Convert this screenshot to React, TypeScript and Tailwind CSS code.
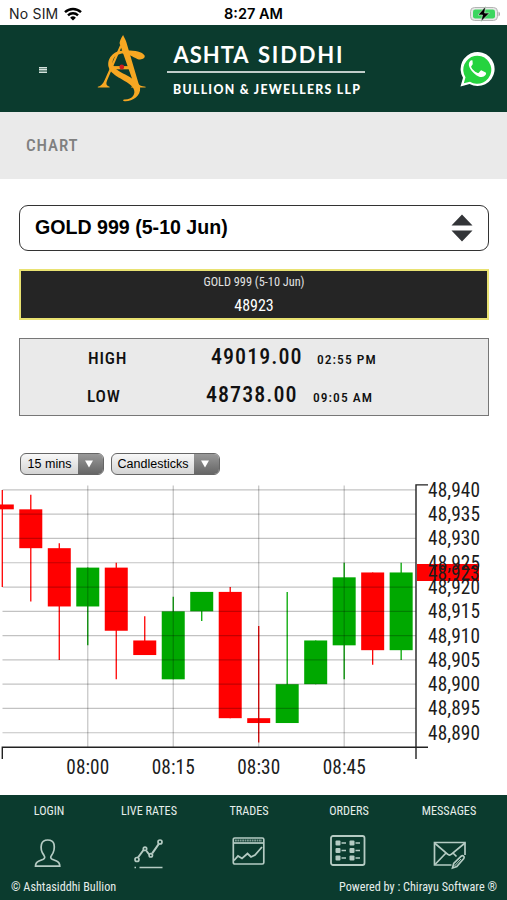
type Candle = {
  open: number;
  close: number;
  high: number;
  low: number;
};

const candles: Candle[] = [
  { open: 48937, close: 48936, high: 48940, low: 48920 },
  { open: 48936, close: 48928, high: 48939, low: 48917 },
  { open: 48928, close: 48916, high: 48929, low: 48905 },
  { open: 48916, close: 48924, high: 48924, low: 48908 },
  { open: 48924, close: 48911, high: 48925, low: 48901 },
  { open: 48909, close: 48906, high: 48914, low: 48906 },
  { open: 48901, close: 48915, high: 48918, low: 48901 },
  { open: 48915, close: 48919, high: 48919, low: 48913 },
  { open: 48919, close: 48893, high: 48920, low: 48893 },
  { open: 48893, close: 48892, high: 48912, low: 48888 },
  { open: 48892, close: 48900, high: 48919, low: 48892 },
  { open: 48900, close: 48909, high: 48909, low: 48900 },
  { open: 48908, close: 48922, high: 48925, low: 48901 },
  { open: 48923, close: 48907, high: 48923, low: 48904 },
  { open: 48907, close: 48923, high: 48925, low: 48905 },
];

const prices = [
  48940, 48935, 48930, 48925, 48920, 48915, 48910, 48905, 48900, 48895, 48890,
];

const times = [
  { label: "08:00", index: 3 },
  { label: "08:15", index: 6 },
  { label: "08:30", index: 9 },
  { label: "08:45", index: 12 },
];

const x = (i: number) => 2.3 + i * 28.49;
const y = (price: number) => 5.9 + (48940 - price) * 4.857;

function StatusBar() {
  return (
    <div className="relative flex h-[25px] items-center justify-between bg-white pr-[6px] pl-[9px] font-['Inter','Liberation_Sans',sans-serif] text-black">
      <div className="flex items-center gap-[6px] pt-[2px]">
        <span className="text-[14px] tracking-[0.2px] text-[#222]">No SIM</span>
        <svg width="18" height="14" viewBox="0 0 18 14" fill="none" stroke="#000" strokeWidth="2.4">
          <path d="M1 5.2a11.5 11.5 0 0 1 16 0" />
          <path d="M4 8.3a7.2 7.2 0 0 1 10 0" />
          <path d="M9 13.6 6.1 10.7a4.2 4.2 0 0 1 5.8 0z" fill="#000" stroke="none" />
        </svg>
      </div>
      <span className="absolute inset-x-0 top-[4px] text-center text-[14.5px] leading-[20px] font-semibold">
        8:27 AM
      </span>
      <svg className="mt-[2px]" width="32" height="16" viewBox="0 0 32 16">
        <rect x="1.5" y="1.5" width="27" height="13" rx="4" fill="#e8e8e8" stroke="#b4b4b4" />
        <rect x="4" y="3.5" width="22" height="9" rx="2.2" fill="#3bd65f" />
        <path d="M29.500 5.5c2 .8 2 4.2 0 5z" fill="#a9a9a9" />
        <path d="M16.500 0.500 9 9h4.500L12 15.500l8.500-8.500h-4.900z" fill="#000" stroke="#d8f5dc" strokeWidth=".6" />
      </svg>
    </div>
  );
}

function Logo() {
  return (
    <svg width="280" height="80" viewBox="95 30 280 80">
      <g fill="#f6a722" transform="translate(.300 .600)">
        <path d="M122.800 35.500c.9 2.200 2.600 4.500 3.200 7l12.400 42c.6 1.500 2.600 2.200 6.900 2.700v.8h-14.500v-.8c3-.3 3.300-1.200 2.800-2.900L119.500 44.500c-.7-2.400 1.800-6.500 3.300-9z" />
        <path d="M121.200 47.500 107 80.500c-1.700 4-.9 5.700 2.300 6.700v.8H97.500v-.8c3.300-.8 5.200-3 7-7l15.500-35z" />
        <path d="M144.300 56c1 3-3.500 4.800-7.300 3.300-5.500-2.200-10-6.300-16.500-5.200-6.800 1.100-9.700 7.200-7.400 12.200 3.400 7.200 25.600 11.800 26.700 21.700.9 8.500-7.700 14-15.300 13.700-1.900-.1-2.300-1.200-.8-1.800 8.300.4 12.200-5.500 9.600-10.700-4.200-8-22.200-11.900-24.800-21.200-2.400-8.600 4.400-16.700 14.500-17 8.600-.3 18.700.1 21.300 5z" />
        <path d="M112 66.500h17v3.200h-17z" />
      </g>
      <circle cx="121.800" cy="68" r="2.400" fill="#d01c1f" />
      <g fill="#fff" className="font-['Lato',sans-serif] font-bold">
        <text x="173.500" y="64" fontSize="22" textLength="75">ASHTA</text>
        <text x="258" y="64" fontSize="22" textLength="84.500">SIDDHI</text>
        <text x="173" y="95" fontSize="12.300" textLength="187" className="font-black">
          BULLION &amp; JEWELLERS LLP
        </text>
      </g>
      <path d="M167 73h198" stroke="#fff" strokeWidth="1.300" />
    </svg>
  );
}

function Header() {
  return (
    <header className="flex h-[87px] items-center bg-[#0b3b2e] pr-[11px] pl-[39px]">
      <button className="mt-[2px] flex h-[6px] w-[8px] flex-col justify-between bg-[#6f9085]">
        <span className="h-[1px] w-full bg-[#d5e2dd]" />
        <span className="h-[1px] w-full bg-[#d5e2dd]" />
        <span className="h-[1px] w-full bg-[#d5e2dd]" />
      </button>
      <div className="ml-12">
        <Logo />
      </div>
      <svg className="mt-px ml-auto" width="38" height="38" viewBox="0 0 38 38">
        <path d="M2.500 36.500 5 27.700A17 17 0 1 1 11.600 34z" fill="#fff" />
        <path d="m5.800 33.300 1.700-6A14 14 0 1 1 12 31.700z" fill="#25d33f" />
        <path
          d="M14.500 10.500c-.7-.5-1.700-.3-2.400.5-3.200 3.700.2 9 4.400 12.700 4.300 3.800 8.700 4.500 11 1.400.8-1.200.7-2.400.2-2.700l-4-2c-.6-.3-1 0-1.400.6l-1.500 1.700c-.5.500-1 .4-1.600.1-3-1.500-4.700-3.300-5.900-5.600-.3-.6 0-1 .4-1.400.7-.8 1.300-1.500 1-2.200z"
          fill="#fff"
        />
      </svg>
    </header>
  );
}

function DropButton({ label, width }: { label: string; width: string }) {
  return (
    <button
      className={`flex h-[22px] overflow-hidden rounded-[6px] border-[1.5px] border-[#666] bg-linear-to-b from-[#f8f8f8] to-[#d4d4d4] font-['Liberation_Sans',Arial,sans-serif] text-[12.500px] leading-[20px] text-black ${width}`}
    >
      <span className="flex-1 text-center whitespace-nowrap">{label}</span>
      <span className="flex h-full w-[25px] items-center justify-center bg-linear-to-b from-[#999] to-[#666] pr-[3px]">
        <svg width="8" height="8" viewBox="0 0 9 8">
          <path d="M0 0h9L4.500 8z" fill="#fff" />
        </svg>
      </span>
    </button>
  );
}

function Chart() {
  return (
    <svg className="block overflow-visible text-[19.300px]" width="507" height="311" viewBox="0 0 507 311">
      {candles.map((c, i) => {
        const color = c.close > c.open ? "#00a800" : "#ff0000";
        const top = y(Math.max(c.open, c.close));
        const bottom = y(Math.min(c.open, c.close));
        return (
          <g key={i}>
            <path d={`M${x(i)} ${y(c.high)}V${y(c.low)}`} stroke={color} strokeWidth="1.300" />
            <rect x={x(i) - 11.500} y={top} width="23" height={bottom - top} fill={color} />
          </g>
        );
      })}

      {/* grid sits on top of the candles */}
      <g stroke="#000" strokeOpacity=".24" strokeWidth="1.200">
        {prices.map((p) => (
          <path key={p} d={`M2.500 ${y(p)}H416`} />
        ))}
        {times.map((t) => (
          <path key={t.label} d={`M${x(t.index)} 1.500V263`} />
        ))}
      </g>

      <g fill="none" stroke="#222" strokeWidth="1.400">
        <path d="M428 .9H416V275" />
        <path d="M2.300 275V263.200H428" />
      </g>

      <rect x="417" y="80" width="62" height="17" fill="#ff0000" />
      <g fill="#1c1c1c">
        {prices.map((p) => (
          <text key={p} x="428" y={y(p) + 7} textLength="52">
            {p.toLocaleString("en-US")}
          </text>
        ))}
        <text x="428" y="95.500" textLength="51.500">48,923</text>
        {times.map((t) => (
          <text key={t.label} x={x(t.index)} y="289.500" textAnchor="middle" textLength="43">
            {t.label}
          </text>
        ))}
      </g>
    </svg>
  );
}

const iconProps = {
  width: 36,
  height: 32,
  viewBox: "0 0 36 32",
  fill: "none",
  stroke: "#b5cbc3",
  strokeWidth: 1.7,
  className: "overflow-visible",
};

const navItems = [
  {
    label: "LOGIN",
    icon: (
      <svg {...iconProps}>
        <path d="M4.500 30.200c0-3 1-4.200 3.500-5.200l4.300-1.800c1.600-.8 1.800-2.300.7-3.800-2.700-3.400-3.500-7.200-2.500-11.100.8-3.100 3-4.300 6.200-4.300s5.600 1.200 6.300 4.300c.8 3.900.1 7.700-2.500 11.100-1.200 1.500-1 3 .7 3.800L25.500 25c2.500 1 3.300 2.200 3.300 5.200z" />
      </svg>
    ),
  },
  {
    label: "LIVE RATES",
    icon: (
      <svg {...iconProps}>
        <path d="m7 21.500 5.500-7.500m3 1 2.700 3.500m3-1.200L28 7.700" strokeWidth="2" />
        <circle cx="6" cy="23.500" r="2" />
        <circle cx="14" cy="12.800" r="1.700" />
        <circle cx="19.800" cy="19.300" r="1.700" />
        <circle cx="29" cy="6" r="2" />
        <path d="M3.500 31.500H5M8.500 31.500h23" />
      </svg>
    ),
  },
  {
    label: "TRADES",
    icon: (
      <svg {...iconProps}>
        <rect x="2.300" y="2" width="30.500" height="26" rx="1.500" />
        <path d="M2.500 7h30" />
        <path d="M4 4.500h27" strokeWidth="2" strokeDasharray="1.800 .6" opacity=".7" />
        <path d="m3 24.500 4-4.500 4 2.500 5.500-5 3.500 3.500 4-2 7-8" strokeWidth="1.800" />
      </svg>
    ),
  },
  {
    label: "ORDERS",
    icon: (
      <svg {...iconProps}>
        <rect x="0" y="0" width="33.500" height="29" rx="2" strokeWidth="1.800" />
        <g fill="#b5cbc3" stroke="none">
          <rect x="4.500" y="4.500" width="5" height="5" rx="1" />
          <rect x="4.500" y="12" width="5" height="5" rx="1" />
          <rect x="4.500" y="19.500" width="5" height="5" rx="1" />
          <rect x="18.500" y="4.500" width="5" height="5" rx="1" />
          <rect x="18.500" y="12" width="5" height="5" rx="1" />
          <rect x="18.500" y="19.500" width="5" height="5" rx="1" />
        </g>
        <path d="M10.500 7H15m-4.500 7.500H15m-4.500 7.500H15M24.500 7H29M24.500 14.500H29M24.500 22H29" strokeWidth="1.300" />
      </svg>
    ),
  },
  {
    label: "MESSAGES",
    icon: (
      <svg {...iconProps}>
        <path d="M20.500 29H3.500V6.500h30.500v12.500" />
        <path d="m3.500 7 13 11.200c1.300 1.100 2.700 1.100 4 0L34 7M4 28.500l10.500-11m8 0 3 3" />
        <path d="m21.500 32 1.200-4.500 7.500-7.300c1.700-1.300 3.800.6 2.600 2.400l-7 8z" />
        <path d="m23.500 30 6.500-7" strokeWidth="1" />
      </svg>
    ),
  },
];

export default function App() {
  return (
    <div className="h-[900px] w-[507px] overflow-hidden bg-white font-['Roboto_Condensed',Roboto,sans-serif] text-[#111] font-stretch-condensed">
      <StatusBar />
      <Header />

      <div className="flex h-[67px] items-center bg-[#eaeaea] pt-px pl-[26px]">
        <h1 className="text-[17px] font-medium tracking-[0.900px] text-[#808080]">CHART</h1>
      </div>

      <main className="h-[616px]">
        <div className="pt-[26px] pr-[18px] pl-[19px]">
          <div className="flex h-[46px] items-center justify-between rounded-[9px] border-[1.500px] border-[#333] pr-[15px] pl-[15px]">
            <span className="font-['Liberation_Sans',Arial,sans-serif] text-[19.600px] font-bold text-black">
              GOLD 999 (5-10 Jun)
            </span>
            <svg width="22" height="28" viewBox="0 0 22 28" fill="#333538">
              <path d="M11 .5 21.500 11.500H.5zM.5 16.500h21L11 27.500z" />
            </svg>
          </div>

          <div className="mt-[18px] flex h-[51px] flex-col items-center border-2 border-[#e9e272] bg-[#252525] text-white">
            <span className="mt-[3px] text-[12.300px] leading-[16px] text-[#e2e2e2]">
              GOLD 999 (5-10 Jun)
            </span>
            <span className="mt-[6px] text-[16px] leading-[20px]">48923</span>
          </div>

          <div className="mt-[18px] flex h-[78px] flex-col border border-[#777] bg-[#eaeaea] text-[#111]">
            <div className="flex h-[38px] items-baseline pl-[68px]">
              <span className="w-[123px] text-[17.300px] leading-[38px] font-medium tracking-[0.800px]">HIGH</span>
              <span className="w-[106px] text-[22px] font-medium tracking-[1.050px]">49019.00</span>
              <span className="text-[13.500px] font-medium tracking-[1.050px]">02:55 PM</span>
            </div>
            <div className="flex h-[38px] items-baseline pl-[67px]">
              <span className="w-[119px] text-[17.300px] leading-[38px] font-medium tracking-[0.800px]">LOW</span>
              <span className="w-[107px] text-[22px] font-medium tracking-[1.050px]">48738.00</span>
              <span className="text-[13.500px] font-medium tracking-[1.050px]">09:05 AM</span>
            </div>
          </div>
        </div>

        <div className="mt-[37px] mb-[9px] flex gap-[7px] pl-5">
          <DropButton label="15 mins" width="w-[84px]" />
          <DropButton label="Candlesticks" width="w-[109px]" />
        </div>

        <Chart />
      </main>

      <footer className="h-[105px] bg-[#0b3b2e] text-[#e6eeeb]">
        <nav className="-ml-px grid w-[500px] grid-cols-5">
          {navItems.map((item) => (
            <a key={item.label} className="flex h-[82px] flex-col items-center pt-[8px] text-[12.200px] leading-[17px]">
              {item.label}
              <span className="mt-[16px]">{item.icon}</span>
            </a>
          ))}
        </nav>
        <div className="flex justify-between pt-[3px] pr-[10px] pl-[11px] text-[12.200px] leading-[14px]">
          <span>© Ashtasiddhi Bullion</span>
          <span>Powered by : Chirayu Software ®</span>
        </div>
      </footer>
    </div>
  );
}
